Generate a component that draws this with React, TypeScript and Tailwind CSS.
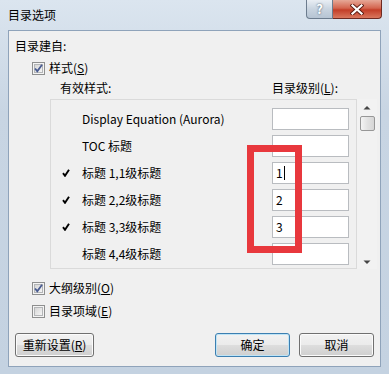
import React from "react";

const rows = [
  { label: "Display Equation (Aurora)", level: "", checked: false },
  { label: "TOC 标题", level: "", checked: false },
  { label: "标题 1,1级标题", level: "1", checked: true, caret: true },
  { label: "标题 2,2级标题", level: "2", checked: true },
  { label: "标题 3,3级标题", level: "3", checked: true },
  { label: "标题 4,4级标题", level: "", checked: false },
];

function CheckBox({ checked }: { checked: boolean }) {
  return (
    <svg width="13" height="13" viewBox="0 0 13 13" className="shrink-0">
      <defs>
        <linearGradient id="cbfill" x1="0" y1="0" x2="1" y2="1">
          <stop offset="0" stopColor="#d4d4d4" />
          <stop offset="1" stopColor="#f7f7f7" />
        </linearGradient>
      </defs>
      <rect x="0.5" y="0.5" width="12" height="12" fill="#f4f4f4" stroke="#8e8f8f" />
      <rect x="2.5" y="2.5" width="8" height="8" fill="url(#cbfill)" stroke="#b4b6b8" />
      {checked && (
        <path d="M3 6.5 L5.3 9.2 L10 2.8" fill="none" stroke="#4a5c91" strokeWidth="1.8" />
      )}
    </svg>
  );
}

function Tick() {
  return (
    <svg width="8" height="8" viewBox="0 0 8 8">
      <path d="M1 4.2 L3 6.8 L7 0.8" fill="none" stroke="#000" strokeWidth="1.9" />
    </svg>
  );
}

function WinButton({ children, primary }: { children: React.ReactNode; primary?: boolean }) {
  return (
    <div
      className={`h-[24px] flex items-center justify-center rounded-[3px] border ${
        primary ? "border-[#3c7fb1] shadow-[inset_0_0_0_1px_#bfe4f6]" : "border-[#707070] shadow-[inset_0_0_0_1px_#fbfbfb]"
      } bg-[linear-gradient(#f2f2f2_0%,#ebebeb_48%,#dddddd_52%,#cfcfcf_100%)]`}
    >
      {children}
    </div>
  );
}

export default function App() {
  return (
    <div className="relative w-[389px] h-[374px] overflow-hidden bg-[linear-gradient(#dbe5ef,#c8d5e3_30%,#c4d2e1)] font-['Noto_Sans_CJK_SC','Microsoft_YaHei',sans-serif] text-[12px] text-black">
      {/* title bar */}
      <div className="h-[30px] flex items-start">
        <div className="pl-[8px] h-[30px] flex items-center text-[12px]">目录选项</div>
        <div className="flex-1" />
        <div className="flex mr-[7px]">
          <div className="w-[27px] h-[19px] rounded-bl-[4px] border border-t-0 border-[#6c7c8e] bg-[linear-gradient(#e9eef4,#c9d4e0_50%,#b6c4d3)] flex items-center justify-center text-white font-bold text-[13px] [text-shadow:0_0_2px_#34465a]">
            ?
          </div>
          <div className="w-[49px] h-[19px] rounded-br-[4px] border border-t-0 border-l-0 border-[#6e2a22] bg-[linear-gradient(#e6a897,#d4654f_45%,#c33e28_55%,#d9775e)] flex items-center justify-center">
            <svg width="14" height="11" viewBox="0 0 14 11">
              <path d="M2.5 1.5 L11.5 9.5 M11.5 1.5 L2.5 9.5" stroke="#5a1b12" strokeWidth="4" strokeLinecap="square" />
              <path d="M2.5 1.5 L11.5 9.5 M11.5 1.5 L2.5 9.5" stroke="#ffffff" strokeWidth="2.2" strokeLinecap="square" />
            </svg>
          </div>
        </div>
      </div>

      {/* client area */}
      <div className="mx-[8px] w-[373px] h-[337px] bg-[#f0f0f0] border border-[#8fa3ba] flex flex-col">
        <div className="h-[16px] mt-[7px] pl-[6px] flex items-center">目录建自:</div>

        <div className="h-[16px] mt-[6px] pl-[23px] flex items-center gap-[4px]">
          <CheckBox checked />
          <span>
            样式(<span className="underline">S</span>)
          </span>
        </div>

        <div className="h-[16px] mt-[4px] flex items-center">
          <span className="ml-[51px] w-[212px]">有效样式:</span>
          <span>
            目录级别(<span className="underline">L</span>):
          </span>
        </div>

        <div className="mt-[3px] ml-[41px] h-[170px] flex">
          <div className="w-[307px] h-full border border-[#dadada] flex flex-col gap-[5px] pt-[8px]">
            {rows.map((r) => (
              <div key={r.label} className="h-[22px] flex items-center">
                <span className="w-[31px] pl-[11px] flex items-center">{r.checked && <Tick />}</span>
                <span className="w-[190px] whitespace-nowrap">{r.label}</span>
                <span className="w-[77px] h-[22px] bg-white border border-[#b9bcc0] flex items-center pl-[3px]">
                  {r.level}
                  {r.caret && <span className="ml-[1px] w-[1px] h-[14px] bg-black" />}
                </span>
              </div>
            ))}
          </div>
          <div className="w-[20px] h-full flex flex-col items-center bg-[#f2f2f2]">
            <svg width="8" height="5" viewBox="0 0 8 5" className="mt-[6px]">
              <path d="M0.5 4.5 L4 1 L7.5 4.5 Z" fill="#454545" />
            </svg>
            <div className="mt-[6px] w-[15px] h-[15px] rounded-[2px] border border-[#979797] bg-[linear-gradient(90deg,#f4f4f4,#e2e2e2_50%,#d6d6d6)]" />
            <div className="flex-1" />
            <svg width="8" height="5" viewBox="0 0 8 5" className="mb-[4px]">
              <path d="M0.5 0.5 L4 4 L7.5 0.5 Z" fill="#454545" />
            </svg>
          </div>
        </div>

        <div className="h-[16px] mt-[11px] pl-[23px] flex items-center gap-[4px]">
          <CheckBox checked />
          <span>
            大纲级别(<span className="underline">O</span>)
          </span>
        </div>

        <div className="h-[16px] mt-[7px] pl-[23px] flex items-center gap-[4px]">
          <CheckBox checked={false} />
          <span>
            目录项域(<span className="underline">E</span>)
          </span>
        </div>

        <div className="mt-[14px] flex items-center">
          <div className="ml-[6px] w-[79px]">
            <WinButton>
              重新设置(<span className="underline">R</span>)
            </WinButton>
          </div>
          <div className="ml-[121px] w-[75px]">
            <WinButton primary>确定</WinButton>
          </div>
          <div className="ml-[9px] w-[75px]">
            <WinButton>取消</WinButton>
          </div>
        </div>
      </div>

      {/* red highlight drawn over the level fields */}
      <div className="absolute left-[247px] top-[145px] w-[55px] h-[108px] border-[7px] border-[#e8383d]" />
    </div>
  );
}
